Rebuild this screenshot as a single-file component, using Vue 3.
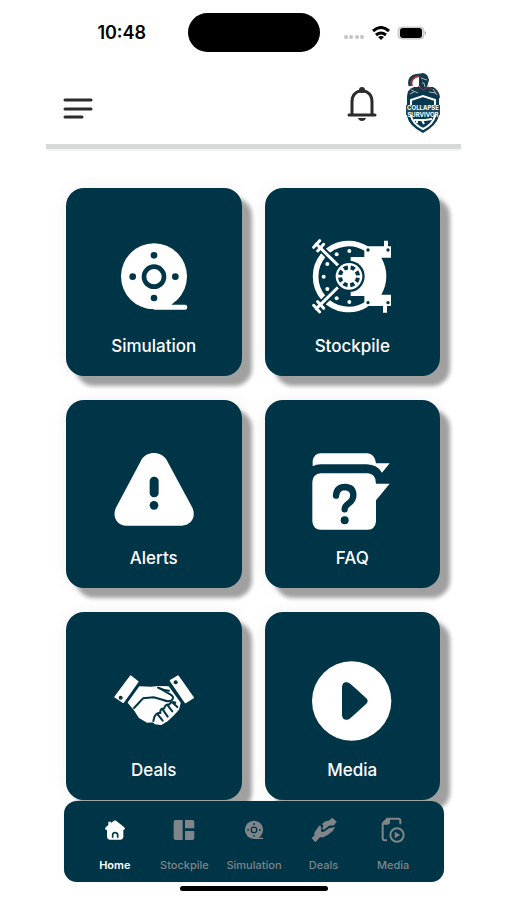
<script setup>
    import {ref} from 'vue';

    const cards = [
        {name: 'Simulation', icon: 'reel', box: '26 20 240 240'},
        {name: 'Stockpile', icon: 'vault', box: '39 35 240 240'},
        {name: 'Alerts', icon: 'alert', box: '26 26 240 240'},
        {name: 'FAQ', icon: 'faq', box: '39 26 240 240'},
        {name: 'Deals', icon: 'handshake', box: '26 20 240 240'},
        {name: 'Media', icon: 'play', box: '0 0 240 240'},
    ];

    const tabs = [
        {name: 'Home', icon: 'home', box: '159 100 72 72'},
        {name: 'Stockpile', icon: 'panels', box: '367 99 72 72'},
        {name: 'Simulation', icon: 'reel', box: '16 10 260 260'},
        {name: 'Deals', icon: 'hands', box: '184 99 72 72'},
        {name: 'Media', icon: 'file-play', box: '397 100 72 72'},
    ];

    const current = ref('Home');
</script>

<template>
    <!-- shared icon shapes -->
    <svg class="sprite" aria-hidden="true">
        <g id="reel">
            <circle cx="146" cy="138" r="99" fill="currentColor"/>
            <path d="M146 238H240Q246 238 246 231Q246 224 240 223H200L180 200Z" fill="currentColor"/>
            <circle cx="146" cy="139" r="30" fill="none" stroke="#003447" stroke-width="14"/>
            <g fill="#003447">
                <circle cx="146" cy="75" r="10"/>
                <circle cx="146" cy="203" r="10"/>
                <circle cx="82" cy="139" r="10"/>
                <circle cx="210" cy="139" r="10"/>
            </g>
        </g>
        <g id="vault">
            <path d="M202 70A99 99 0 1 0 202 237" fill="none" stroke="currentColor" stroke-width="17"/>
            <g stroke="#003447" stroke-width="20">
                <path d="M48 52L120 122M48 254L120 184"/>
            </g>
            <g stroke="currentColor" stroke-width="9" stroke-linecap="round">
                <path d="M52 56L118 121M52 250L118 185"/>
                <path d="M44 66L62 46M56 77L74 57M44 240L62 260M56 229L74 249"/>
            </g>
            <path d="M155 95H196V63H255V46H267V63H276V97H247Q262 124 262 153Q262 182 247 208H276V242H264V262H252V242H196V212H155Z" fill="currentColor"/>
            <circle cx="150" cy="153" r="47" fill="#003447"/>
            <circle cx="150" cy="153" r="40" fill="currentColor"/>
            <circle cx="150" cy="153" r="27" fill="none" stroke="#003447" stroke-width="12" stroke-dasharray="13 8.2" stroke-dashoffset="17"/>
            <g fill="#003447">
                <circle cx="207" cy="74" r="5"/>
                <circle cx="267" cy="74" r="5"/>
                <circle cx="207" cy="232" r="5"/>
                <circle cx="267" cy="232" r="5"/>
            </g>
            <g fill="currentColor">
                <circle cx="151" cy="77" r="6"/>
                <circle cx="113" cy="87" r="6"/>
                <circle cx="85" cy="116" r="6"/>
                <circle cx="74" cy="154" r="6"/>
                <circle cx="85" cy="191" r="6"/>
                <circle cx="113" cy="219" r="6"/>
                <circle cx="151" cy="230" r="6"/>
            </g>
        </g>
        <g id="alert">
            <path d="M108 59C123 31 168 31 184 59L260 200C275 228 257 256 229 256H63C35 256 18 228 33 200Z" fill="currentColor"/>
            <rect x="133" y="109" width="27" height="62" rx="13" fill="#003447"/>
            <circle cx="146" cy="195" r="13" fill="#003447"/>
        </g>
        <g id="faq">
            <path d="M41 78V62Q45 39 65 39H205Q227 40 231 69H272L249 97Q235 73 204 72H65Q51 72 41 78Z" fill="currentColor"/>
            <path d="M65 99H207Q231 101 231 130H272L231 180V244Q228 267 207 268H65Q43 267 40 244V124Q42 101 65 99Z" fill="currentColor"/>
            <path d="M111 166Q113 140 138 140Q163 141 163 165Q163 180 149 189Q137 197 137 207" fill="none" stroke="#003447" stroke-width="19" stroke-linecap="round"/>
            <circle cx="137" cy="240" r="12" fill="#003447"/>
        </g>
        <g id="handshake">
            <g fill="currentColor" stroke="currentColor" stroke-width="4" stroke-linejoin="round">
                <path d="M76 65L98 82L54 144L29 128Z"/>
                <path d="M195 79L218 65L264 130L240 145Z"/>
                <path d="M103 98L136 99L160 97L189 98L224 146L219 166L203 183L187 198L167 210L149 208L144 202L125 203L102 189L87 166L69 145Z"/>
            </g>
            <g fill="#003447">
                <circle cx="46" cy="130" r="6"/>
                <circle cx="211" cy="84" r="6"/>
            </g>
            <g fill="none" stroke="#003447" stroke-width="6" stroke-linecap="round" stroke-linejoin="round">
                <path d="M86 161L113 132L145 129L174 137Q188 144 199 138Q209 129 195 120L161 101"/>
                <path d="M158 100Q174 108 191 109"/>
                <path d="M203 146L216 158M187 153L201 171M172 165L187 187M157 180L172 199M144 200L147 188Q153 174 165 176Q163 162 177 162Q179 149 191 151Q199 139 210 145"/>
            </g>
        </g>
        <g id="play">
            <circle cx="119" cy="120" r="119" fill="currentColor"/>
            <path d="M90 78Q91 61 106 64Q112 65 120 73L163 112Q171 120 163 128L120 167Q112 175 106 176Q91 178 90 162Z" fill="#003447"/>
        </g>
        <g id="home">
            <path d="M192 108Q195 106 198 108L223 128Q227 133 222 136H220V158Q219 165 212 165H179Q172 165 171 158V136H168Q163 133 167 128L175 121V111H183V115Z" fill="currentColor"/>
            <path d="M188 159V150Q189 144 195 144Q202 144 203 150V159" fill="none" stroke="#003447" stroke-width="5"/>
        </g>
        <g id="panels" fill="currentColor">
            <path d="M378 105H399V165H378Q372 165 372 159V111Q372 105 378 105Z"/>
            <path d="M406 105H428Q434 105 434 111V130H406Z"/>
            <path d="M406 138H434V159Q434 165 428 165H406Z"/>
        </g>
        <g id="hands" fill="currentColor">
            <path d="M183 160L191 151V143L203 125L208 121L212 127L211 140L220 140L235 130L253 126L247 137L232 149L218 157H208L194 172Z"/>
            <path d="M213 118L224 109L234 107L245 98L258 110L250 121L235 122L220 134L215 133L218 121Z"/>
        </g>
        <g id="file-play">
            <path d="M402 116L416 102H449Q455 102 455 109V119M402 116V160Q402 167 409 167H415" fill="none" stroke="currentColor" stroke-width="6" stroke-linejoin="round"/>
            <path d="M402 120V114L414 101H424V112Q424 120 416 120Z" fill="currentColor"/>
            <circle cx="445" cy="151" r="20" fill="none" stroke="currentColor" stroke-width="6"/>
            <path d="M438 141L455 151L438 161Z" fill="currentColor"/>
        </g>
    </svg>

    <div class="screen">
        <div class="status">
            <span class="time">10:48</span>
            <span class="island"></span>
            <div class="signals">
                <svg width="22" height="16" viewBox="0 0 22 16" fill="#c4c4c4">
                    <circle cx="3" cy="12" r="2"/>
                    <circle cx="8" cy="12" r="2"/>
                    <circle cx="14" cy="12" r="2"/>
                    <circle cx="19" cy="12" r="2"/>
                </svg>
                <svg width="18" height="14" viewBox="0 0 18 14">
                    <g fill="none" stroke="#000" stroke-width="3">
                        <path d="M1 5Q9 -2 17 5M4 9Q9 5 14 9"/>
                    </g>
                    <path d="M6 11Q9 9 12 11L9 14Z"/>
                </svg>
                <svg width="30" height="14" viewBox="0 0 30 14">
                    <rect x="1" y="1" width="26" height="12" rx="4" fill="#ddd" stroke="#c4c4c4"/>
                    <rect x="3" y="2" width="22" height="10" rx="3"/>
                    <path d="M28 5Q30 7 28 9Z" fill="#999"/>
                </svg>
            </div>
        </div>

        <header class="header">
            <button class="icon_button menu" aria-label="Menu">
                <svg width="30" height="22" viewBox="0 0 30 22" stroke="#2b2b2d" stroke-width="3" stroke-linecap="round">
                    <path d="M2 2H28M2 11H28M2 19H19"/>
                </svg>
            </button>
            <button class="icon_button bell" aria-label="Notifications">
                <svg width="30" height="36" viewBox="0 0 30 36">
                    <path d="M5 28V16C5 9 9 5 15 5S25 9 25 16V28M2 29H28" fill="none" stroke="#2b2b2d" stroke-width="3" stroke-linecap="round"/>
                    <circle cx="15" cy="4" r="3" fill="#2b2b2d"/>
                    <path d="M11 32H19Q18 35 15 35T11 32Z" fill="#2b2b2d"/>
                </svg>
            </button>
            <a class="logo" href="#" aria-label="Collapse Survivor">
                <svg width="36" height="62" viewBox="0 0 36 62">
                    <path d="M5 14C3 6 8 3 16 3" fill="none" stroke="#17384c" stroke-width="3"/>
                    <path d="M7 14C5 8 9 5 14 4" fill="none" stroke="#953641" stroke-width="2"/>
                    <path d="M14 5Q15 1 18 1Q23 2 24 8L22 15L18 17L14 14Z" fill="#15384b"/>
                    <path d="M16 6L22 8M17 11L19 11L20 15" fill="none" stroke="#a7b3bc"/>
                    <path d="M2 25Q2 17 9 15H28Q34 18 35 25L33 29H3Z" fill="#15384b"/>
                    <path d="M13 14L18 18L23 15L27 17" fill="none" stroke="#953641"/>
                    <path d="M6 18L13 21M24 20L31 21M28 17L32 23M5 22L9 20" stroke="#a7b3bc"/>
                    <path d="M2 25L18 20L34 25V44Q31 54 18 61Q4 54 2 44Z" fill="#073a50"/>
                    <path d="M6 28L18 24L30 28V44Q28 52 18 57Q8 52 6 44Z" fill="#073a50" stroke="#fff" stroke-width="2"/>
                    <rect x="1" y="33" width="34" height="10" fill="#1d4a5e"/>
                    <text x="18" y="38" class="logo_text">COLLAPSE</text>
                    <text x="18" y="45" class="logo_text">SURVIVOR</text>
                    <path d="M9 48H20L27 47M12 48V51M17 48L19 52" fill="none" stroke="#fff" stroke-width="2"/>
                </svg>
            </a>
        </header>

        <main class="cards">
            <button class="card" v-for="card in cards" :key="card.name">
                <svg class="card_icon" :viewBox="card.box"><use :href="'#' + card.icon"/></svg>
                <span>{{ card.name }}</span>
            </button>
        </main>

        <nav class="tabs">
            <a
                v-for="tab in tabs"
                :key="tab.name"
                href="#"
                class="tab"
                :class="{active: tab.name === current}"
                @click.prevent="current = tab.name"
            >
                <svg class="tab_icon" :viewBox="tab.box"><use :href="'#' + tab.icon"/></svg>
                <span>{{ tab.name }}</span>
            </a>
        </nav>
        <div class="home_bar"></div>
    </div>
</template>

<style>
    body
    {
        margin: 0;
        background-color: #fff;
    }
</style>

<style scoped>
    .sprite
    {
        position: absolute;
        width: 0;
        height: 0;
    }
    .screen
    {
        box-sizing: border-box;
        padding: 0 46px;
        font-family: Inter, "Liberation Sans", sans-serif;
    }
    svg
    {
        display: block;
        flex: none;
    }
    .status
    {
        display: grid;
        grid-template-columns: 1fr 132px 1fr;
        align-items: center;
        padding-top: 13px;
    }
    .time
    {
        padding-left: 10px;
        text-align: center;
        font-size: 18px;
        line-height: 24px;
        font-weight: 600;
    }
    .island
    {
        height: 39px;
        border-radius: 20px;
        background-color: #000;
    }
    .signals
    {
        display: flex;
        align-items: center;
        gap: 7px;
        padding-left: 23px;
    }
    .header
    {
        display: flex;
        align-items: flex-end;
        box-sizing: border-box;
        height: 97px;
        padding: 0 20px 10px 17px;
        border-bottom: 5px solid #d7d9d9;
        box-shadow: 0 2px 2px -1px #e8e8e8;
    }
    .icon_button
    {
        padding: 0;
        border: none;
        background: none;
    }
    .menu
    {
        margin-bottom: 14px;
    }
    .bell
    {
        margin-left: auto;
        margin-right: 28px;
        margin-bottom: 12px;
    }
    .logo_text
    {
        fill: #fff;
        text-anchor: middle;
        font-weight: 700;
        font-size: 6px;
    }
    .cards
    {
        display: grid;
        grid-template-columns: 1fr 1fr;
        gap: 24px 23px;
        padding: 39px 21px 0 20px;
    }
    .card
    {
        display: flex;
        flex-direction: column;
        align-items: center;
        gap: 17px;
        padding: 49px 0 18px;
        border: none;
        border-radius: 18px;
        background-color: #003447;
        box-shadow: 10px 10px 4px #a0a0a0, 0 0 16px #f0f0f0;
        color: #fff;
        font-family: inherit;
        font-size: 17px;
        line-height: 24px;
        font-weight: 500;
    }
    .card_icon
    {
        width: 80px;
        height: 80px;
        overflow: visible;
    }
    .tabs
    {
        position: relative;
        display: flex;
        margin: 1px 17px 0 18px;
        padding: 17px 16px 8px;
        border-radius: 13px;
        background-color: #003447;
        box-shadow: 0 0 1px #a9b4b9;
    }
    .tab
    {
        flex: 1 1 0;
        display: flex;
        flex-direction: column;
        align-items: center;
        gap: 14px;
        color: #7f8589;
        font-size: 11px;
        line-height: 18px;
        font-weight: 500;
        text-decoration: none;
    }
    .tab_icon
    {
        width: 24px;
        height: 24px;
        overflow: visible;
    }
    .active
    {
        color: #fff;
        font-weight: 600;
    }
    .home_bar
    {
        width: 148px;
        height: 5px;
        margin: 4px auto 9px;
        border-radius: 3px;
        background-color: #000;
    }
</style>
